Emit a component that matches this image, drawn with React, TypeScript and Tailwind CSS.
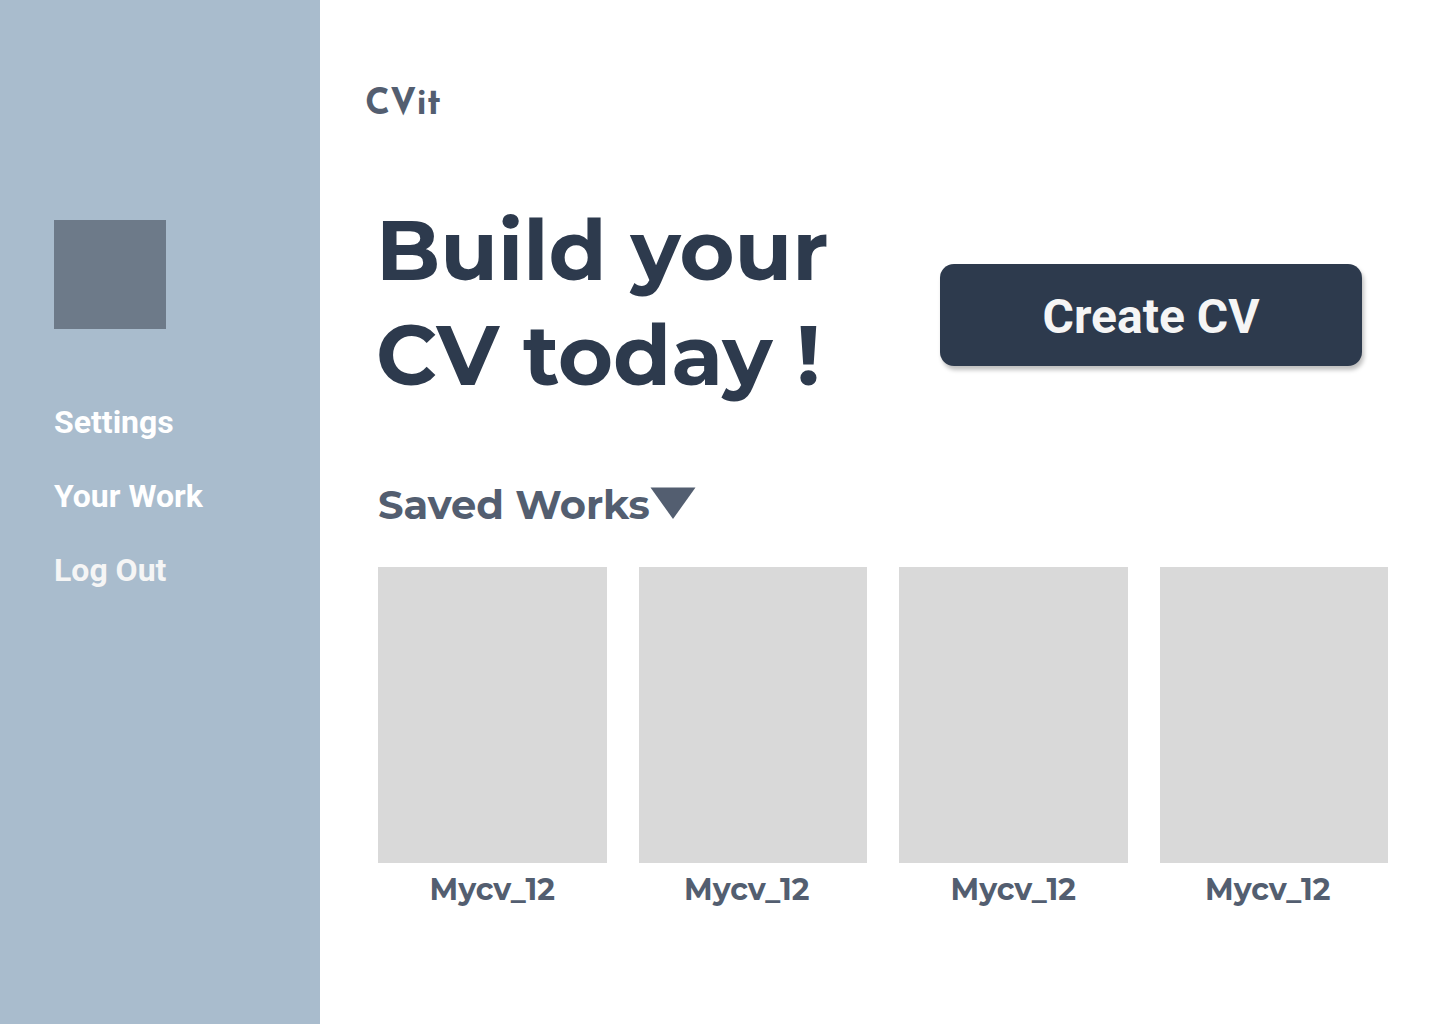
const works = [
  { id: 1, title: 'Mycv_12' },
  { id: 2, title: 'Mycv_12' },
  { id: 3, title: 'Mycv_12' },
  { id: 4, title: 'Mycv_12' },
];

export default function App() {
  return (
    <div className="flex min-h-screen bg-white font-['Montserrat','Inter',sans-serif]">
      <aside className="w-80 shrink-0 bg-[#a9bccd] px-[54px] pt-[220px] font-['Roboto',sans-serif]">
        <div className="h-[109px] w-28 bg-[#6d7a89]" />
        <nav className="mt-[74px] flex flex-col items-start gap-9 text-[32px] leading-[38px] font-bold text-white">
          <a href="#settings">Settings</a>
          <a href="#work">Your Work</a>
          <a href="#logout" className="text-[#f5f5f5]">Log Out</a>
        </nav>
      </aside>
      <main className="min-w-0 flex-1 pr-[52px] pl-14">
        <header className="-ml-[11px] pt-[83px]">
          <a href="#home" className="inline-block font-['Josefin_Sans','Lato',sans-serif] text-[36px] leading-[44px] font-bold text-[#535e70]">CVit</a>
        </header>
        <section className="mt-[71px] flex items-center justify-between pr-[26px]">
          <h1 className="text-[84px] leading-[105px] font-bold whitespace-nowrap text-[#2d3a4d]">
            Build your
            <br />
            CV today !
          </h1>
          <button type="button" className="mt-6 h-[102px] w-[422px] rounded-[14px] bg-[#2d3a4d] pt-1 font-['Roboto',sans-serif] text-[48px] font-bold text-[#f5f5f5] shadow-[2px_4px_4px_rgba(0,0,0,0.25)]">
            Create CV
          </button>
        </section>
        <section className="mt-[72px] pl-0.5">
          <button type="button" className="flex items-center text-[40px] leading-[49px] font-bold text-[#535e70]">
            Saved Works
            <svg aria-hidden="true" viewBox="0 0 46 35" className="h-[35px] w-[46px]" fill="currentColor">
              <path d="M0.5 0.5H45.5L23 32Z" />
            </svg>
          </button>
          <ul className="mt-[38px] grid grid-cols-4 gap-8">
            {works.map((w) => (
              <li key={w.id} className="group">
                <a href="#cv" className="block text-center text-[30px] leading-[37px] font-bold text-[#535e70]">
                  <span className="mb-2 block h-[296px] bg-[#d9d9d9]" />
                  <span className="block group-even:pr-3">{w.title}</span>
                </a>
              </li>
            ))}
          </ul>
        </section>
      </main>
    </div>
  );
}
